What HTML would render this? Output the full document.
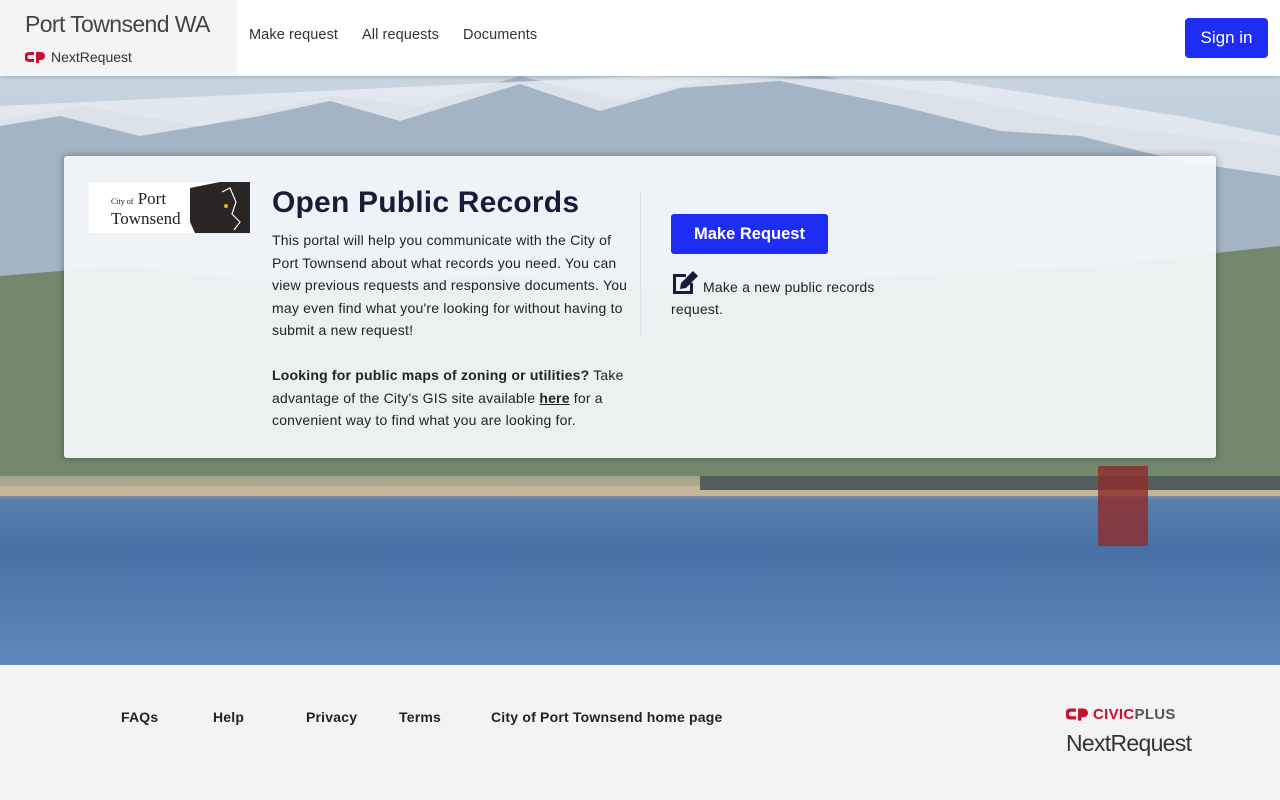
<!DOCTYPE html>
<html><head><meta charset="utf-8"><style>
*{margin:0;padding:0;box-sizing:border-box}
body{width:1280px;height:800px;overflow:hidden;font-family:"Liberation Sans",sans-serif;background:#f3f3f5;position:relative}
.hdr{position:absolute;top:0;left:0;width:1280px;height:76px;background:#fff;box-shadow:0 1px 4px rgba(0,0,0,.2);z-index:3}
.brand{position:absolute;left:0;top:0;width:237px;height:76px;background:#f4f4f4}
.brand .t{position:absolute;left:25px;top:11px;font-size:23px;color:#444;letter-spacing:-.6px}
.brand .n{position:absolute;left:25px;top:49px;font-size:14px;color:#333}
.nav{position:absolute;top:27px;font-size:14.5px;color:#333;letter-spacing:.1px}
.sign{position:absolute;right:12px;top:18px;width:83px;height:40px;background:#1e2df5;color:#fff;border-radius:4px;font-size:17px;text-align:center;line-height:40px}
.hero{position:absolute;top:76px;left:0;width:1280px;height:589px;overflow:hidden;
background:linear-gradient(180deg,#c9d6e2 0%,#b9cad8 14%,#a9bccc 25%,#8fa29a 40%,#7f937c 55%,#94a08c 66%,#b5a890 70%,#5a80ac 72%,#4870a4 80%,#5f88bb 100%)}
.card{position:absolute;left:64px;top:156px;width:1152px;height:302px;background:rgba(244,247,251,.93);border-radius:3px;box-shadow:0 0 8px rgba(0,0,0,.35);z-index:2}
.logo{position:absolute;left:25px;top:26px;width:161px;height:51px;background:#fff;overflow:hidden}
h1{position:absolute;left:208px;top:30px;font-size:30px;color:#1a1a3a;font-weight:bold;letter-spacing:.2px}
.txt{position:absolute;left:208px;top:73px;width:356px;font-size:14px;line-height:22.5px;color:#222;letter-spacing:.2px}
.div{position:absolute;left:576px;top:36px;width:1px;height:146px;background:#dde2ea}
.mr{position:absolute;left:607px;top:58px;width:157px;height:40px;background:#1e2df5;color:#fff;border-radius:3px;font-size:16.5px;font-weight:bold;text-align:center;line-height:40px}
.mtxt{position:absolute;left:607px;top:114px;width:230px;font-size:14px;line-height:22px;color:#222;letter-spacing:.2px}
.ft{position:absolute;top:709px;font-size:14px;font-weight:bold;color:#222;letter-spacing:.2px}
</style></head><body>
<div class="hdr">
 <div class="brand"><div class="t">Port Townsend WA</div>
 <div class="n"><svg width="20" height="12" viewBox="0 0 20 12" style="vertical-align:-1px;margin-right:6px"><path d="M9 1H4a5 5 0 0 0 0 10h5V8H4.5a2 2 0 0 1 0-4H9z" fill="#c8102e"/><path d="M11 1h5a4 4 0 0 1 0 8h-2v3h-3z" fill="#c8102e"/></svg>NextRequest</div></div>
 <div class="nav" style="left:249px">Make request</div>
 <div class="nav" style="left:362px">All requests</div>
 <div class="nav" style="left:463px">Documents</div>
 <div class="sign">Sign in</div>
</div>
<div class="hero">
 <svg width="1280" height="589" style="position:absolute;left:0;top:0">
  <path d="M0 45 L80 30 L200 50 L330 20 L420 30 L520 0 L620 25 L700 5 L820 0 L950 20 L1100 50 L1280 70 L1280 200 L0 200Z" fill="#a3b4c4"/>
  <path d="M0 50 L60 40 L140 60 L260 40 L330 25 L400 45 L520 8 L600 35 L680 12 L780 5 L900 30 L1000 55 L1080 60 L1180 85 L1280 100 L1280 60 L1180 40 L950 5 L640 0 L0 30Z" fill="#e8eef4" opacity=".8"/>
  <path d="M0 200 L120 190 L300 210 L500 200 L700 215 L900 200 L1100 190 L1280 170 L1280 400 L0 400Z" fill="#74886e"/>
  <rect x="0" y="410" width="1280" height="10" fill="#c4b49a"/>
  <rect x="700" y="400" width="580" height="14" fill="#555c5e"/>
  <rect x="1098" y="390" width="50" height="80" fill="#8e2a2a" opacity=".8"/>
 </svg>
</div>
<div class="card">
 <div class="logo">
  <div style="position:absolute;left:22px;top:8px;font-family:'Liberation Serif',serif;font-size:17px;color:#222;line-height:17px"><span style="font-size:8px">City of</span> Port<br>Townsend</div>
  <svg width="60" height="51" viewBox="0 0 60 51" style="position:absolute;right:0;top:0"><path d="M0 6 L30 0 L60 0 L60 51 L5 51 L0 40Z" fill="#2b2626"/><path d="M32 10 L40 6 L46 20 L42 32 L50 40 L44 48" stroke="#fff" stroke-width="1.2" fill="none"/><circle cx="36" cy="24" r="2" fill="#e0b030"/></svg>
 </div>
 <h1>Open Public Records</h1>
 <div class="txt">This portal will help you communicate with the City of Port Townsend about what records you need. You can view previous requests and responsive documents. You may even find what you're looking for without having to submit a new request!<br><br><b>Looking for public maps of zoning or utilities?</b> Take advantage of the City's GIS site available <b><u>here</u></b> for a convenient way to find what you are looking for.</div>
 <div class="div"></div>
 <div class="mr">Make Request</div>
 <div class="mtxt"><svg width="28" height="24" viewBox="0 0 28 24" style="vertical-align:-2px;margin-right:4px"><path d="M2 4h13v3H5v14h14v-8h3v11H2z" fill="#1a1a3a"/><path d="M10 13 L22 1 L27 6 L15 18 L9 19Z" fill="#1a1a3a"/></svg>Make a new public records request.</div>
</div>
<div class="ft" style="left:121px">FAQs</div>
<div class="ft" style="left:213px">Help</div>
<div class="ft" style="left:306px">Privacy</div>
<div class="ft" style="left:399px">Terms</div>
<div class="ft" style="left:491px">City of Port Townsend home page</div>
<div style="position:absolute;left:1066px;top:706px;font-size:15px;font-weight:bold;color:#c8102e;letter-spacing:.3px"><svg width="22" height="14" viewBox="0 0 20 12" style="vertical-align:-2px;margin-right:5px"><path d="M9 1H4a5 5 0 0 0 0 10h5V8H4.5a2 2 0 0 1 0-4H9z" fill="#c8102e"/><path d="M11 1h5a4 4 0 0 1 0 8h-2v3h-3z" fill="#c8102e"/></svg>CIVIC<span style="color:#555">PLUS</span></div>
<div style="position:absolute;left:1066px;top:730px;font-size:23px;color:#333;letter-spacing:-.7px">NextRequest</div>
</body></html>
